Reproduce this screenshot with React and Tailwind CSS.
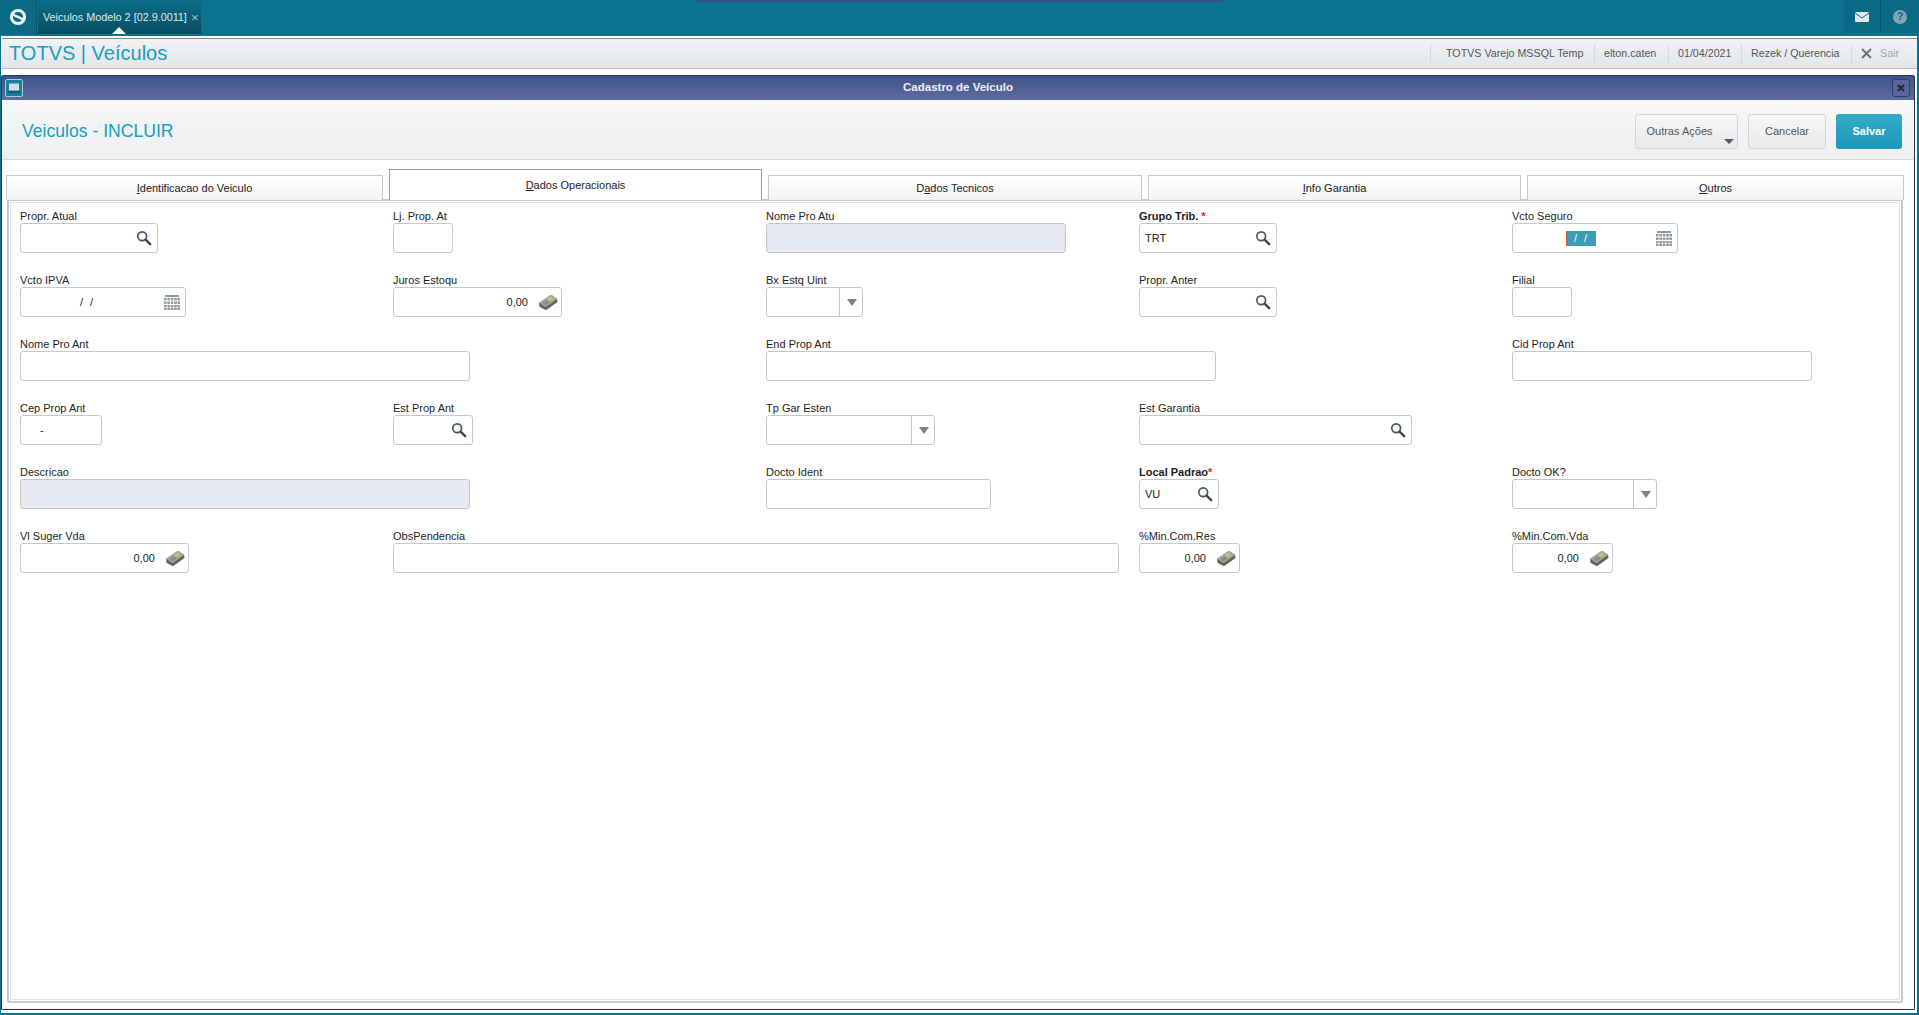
const font = { fontFamily: '"Liberation Sans", Arial, sans-serif' };

const SearchIcon = () => (
  <svg width="16" height="16" viewBox="0 0 16 16" className="shrink-0">
    <circle cx="6.2" cy="6.2" r="4.4" fill="#f4f6f8" stroke="#4b5563" strokeWidth="1.7" />
    <path d="M9.6 9.6 L14.2 14.2" stroke="#3f4754" strokeWidth="2.4" strokeLinecap="round" />
  </svg>
);

const CalendarIcon = () => (
  <svg width="16" height="15" viewBox="0 0 16 15" fill="#8f96a0" className="shrink-0">
    <rect x="1" y="0" width="14" height="2" />
    {[3, 6.5, 10, 13].map(y =>
      [0, 3.4, 6.8, 10.2, 13.4].map(x => <rect key={`${x}-${y}`} x={x} y={y} width="2.6" height="2.4" />)
    )}
  </svg>
);

const MoneyIcon = () => (
  <svg width="20" height="17" viewBox="0 0 20 17" className="shrink-0">
    <path d="M1 9 L12 1.5 Q13 1 14 1.5 L19 5 L19.5 8 L9 15.5 Q8 16.3 6.5 15.6 L1.5 12.8 Z" fill="#66625a" />
    <path d="M1 8.8 L12 1.2 Q13 0.8 14 1.3 L19.3 4.8 L8.5 12.6 Q7.5 13.2 6.5 12.6 Z" fill="#aaa79c" />
    <path d="M9 5 L12.4 2.8 L15.4 4.8 L12 7.2 Z" fill="#a6d872" />
    <path d="M4 9 L8.5 6 L12 8.4 L7.6 11.4 Z" fill="#8f8c80" />
  </svg>
);

const Field = ({ label, className = '', w, kind, value, disabled, bold, req }) => (
  <div className={className}>
    <div className={`h-[14px] whitespace-pre text-[11px] leading-[14px] text-[#1d1d1d] ${bold ? 'font-bold' : ''}`}>
      {label}
      {req && <span className="text-[#e0242c]">{req}</span>}
    </div>
    <div
      className={`flex h-[30px] items-center rounded-[3px] border border-[#c6c6c6] text-[11px] text-[#222] ${w} ${
        disabled ? 'bg-[#e6e9ef]' : 'bg-white'
      }`}
    >
      {kind === 'search' && (
        <>
          <span className="flex-1 pl-[5px]">{value}</span>
          <span className="mr-[5px]"><SearchIcon /></span>
        </>
      )}
      {kind === 'date' && (
        <>
          <span className="flex-1 pl-[59px] tracking-[2px]">/ /</span>
          <span className="mr-[5px]"><CalendarIcon /></span>
        </>
      )}
      {kind === 'dateActive' && (
        <>
          <span className="ml-[53px] h-[15px] w-[30px] border-l border-[#c0583c] bg-[#3a9cb8] text-center leading-[15px] tracking-[2px] text-white">/ /</span>
          <span className="flex-1" />
          <span className="mr-[5px]"><CalendarIcon /></span>
        </>
      )}
      {kind === 'money' && (
        <>
          <span className="flex-1 pr-[10px] text-right">0,00</span>
          <span className="mr-[3px]"><MoneyIcon /></span>
        </>
      )}
      {kind === 'select' && (
        <>
          <span className="flex-1" />
          <span className="flex h-full w-[23px] items-center justify-center border-l border-[#c6c6c6] pl-[2px]">
            <span className="h-0 w-0 border-x-[5px] border-t-[7px] border-x-transparent border-t-[#7a828c]" />
          </span>
        </>
      )}
      {kind === 'cep' && <span className="pl-[19px]">-</span>}
    </div>
  </div>
);

const Tab = ({ children, className = '', active }) => (
  <div
    className={`flex shrink-0 items-center justify-center text-[11px] text-[#222] ${className} ${
      active
        ? 'h-[31px] border-x border-t border-[#9a9a9a] bg-white'
        : 'h-[25px] border-x border-t border-[#c8c8c8] bg-gradient-to-b from-white to-[#f2f2f2] pt-px'
    }`}
  >
    <span>{children}</span>
  </div>
);

const HeaderCell = ({ children, className = '' }) => (
  <div className={`flex h-[20px] items-center whitespace-nowrap border-l border-[#d5d8dc] ${className}`}>{children}</div>
);

const Button = ({ children, className = '' }) => (
  <div className={`flex h-[35px] items-center justify-center rounded-[3px] border border-[#d5d5d5] bg-gradient-to-b from-[#f7f7f7] to-[#e9e9e9] pt-px text-[11px] text-[#555] ${className}`}>
    {children}
  </div>
);

export default function App() {
  return (
    <div style={font} className="relative flex h-[1015px] w-[1919px] flex-col overflow-hidden bg-white">
      {/* faixa azul do canto superior */}
      <div className="absolute left-[695px] top-0 h-[2px] w-[527px] bg-[#33508c]" />

      {/* barra superior */}
      <div className="flex h-[36px] shrink-0 bg-[#0b7390]">
        <div className="flex h-[34px] w-[36px] items-center justify-center bg-[#0a6a85]">
          <svg width="18" height="18" viewBox="0 0 18 18">
            <circle cx="9" cy="9" r="6.6" fill="none" stroke="#eef6f8" strokeWidth="3" />
            <path d="M3.8 6.6 L14.2 11.4" stroke="#eef6f8" strokeWidth="2.6" />
          </svg>
        </div>
        <div className="w-px bg-[#08566c]" />
        <div className="relative ml-px flex h-[34px] w-[163px] items-center whitespace-nowrap bg-gradient-to-b from-[#0b6e88] to-[#064e62] pl-[5px] text-[10.8px] text-[#dcecf0]">
          <span>Veiculos Modelo 2 [02.9.0011]</span>
          <span className="ml-[4px] text-[13px] leading-none text-[#9fc0ca]">×</span>
          <span className="absolute bottom-0 left-[74px] h-0 w-0 border-x-[7px] border-b-[7px] border-x-transparent border-b-white" />
        </div>
        <div className="flex-1" />
        <div className="flex h-[33px] w-[37px] items-center justify-center border-r border-[#08566c] bg-[#0a6a85]">
          <svg width="14" height="10" viewBox="0 0 14 10">
            <rect width="14" height="10" rx="1" fill="#dfe9ee" />
            <path d="M0 1 L7 6 L14 1" fill="none" stroke="#0a6a85" strokeWidth="1" />
          </svg>
        </div>
        <div className="flex h-[33px] w-[38px] items-center justify-center bg-[#0a6a85]">
          <span className="flex h-[14px] w-[14px] items-center justify-center rounded-full bg-[#84a6b3] text-[11px] font-bold leading-none text-[#0a6a85]">?</span>
        </div>
      </div>

      {/* area branca com as bordas da janela principal */}
      <div className="flex min-h-0 flex-1 flex-col border-b-2 border-l border-r-2 border-[#0b7390] pt-[2px]">
        {/* cabecalho TOTVS */}
        <div className="ml-px flex h-[31px] shrink-0 items-center border-y border-t-[#8a8a8a] border-b-[#bcbcbc] bg-gradient-to-b from-[#f0f2f4] to-[#e3e6e9] pl-[7px]">
          <span className="-mt-[2px] flex-1 text-[20px] leading-none text-[#159fc2]">TOTVS | Veículos</span>
          <div className="flex items-center text-[10.7px] text-[#555]">
            <HeaderCell className="w-[164px] pl-[15px]">TOTVS Varejo MSSQL Temp</HeaderCell>
            <HeaderCell className="w-[74px] pl-[9px]">elton.caten</HeaderCell>
            <HeaderCell className="w-[73px] pl-[9px]">01/04/2021</HeaderCell>
            <HeaderCell className="w-[110px] pl-[9px]">Rezek / Querencia</HeaderCell>
            <HeaderCell className="w-[66px] pl-[9px]">
              <svg width="11" height="11" viewBox="0 0 11 11" className="mr-[8px]">
                <path d="M1 1 L10 10 M10 1 L1 10" stroke="#6b7078" strokeWidth="1.8" />
              </svg>
              <span className="text-[#a0a4a8]">Sair</span>
            </HeaderCell>
          </div>
        </div>

        {/* janela Cadastro de Veiculo */}
        <div className="mb-[3px] mr-[2px] mt-[6px] flex min-h-0 flex-1 flex-col rounded-t-[2px] border border-[#1f3a64] bg-white">
          <div className="relative flex h-[24px] shrink-0 items-center justify-center bg-gradient-to-b from-[#3f5289] to-[#616c9f] text-[11.5px] font-bold text-[#eef0f6]">
            Cadastro de Veículo
            <span className="absolute left-[3px] top-[3px] flex h-[18px] w-[18px] items-center justify-center rounded-[2px] border border-[#9fd0dc] bg-[#17809e]">
              <svg width="12" height="11" viewBox="0 0 12 11">
                <rect x="1" y="0.5" width="10" height="7" fill="#d4dde2" />
                <rect x="0" y="8" width="12" height="2" fill="#0c5a70" />
              </svg>
            </span>
            <span className="absolute right-[4px] top-[3px] flex h-[18px] w-[18px] items-center justify-center rounded-[3px] border border-[#2d3d70] bg-[#5a669a]">
              <svg width="8" height="8" viewBox="0 0 8 8">
                <path d="M1 1 L7 7 M7 1 L1 7" stroke="#20263f" strokeWidth="2" />
              </svg>
            </span>
          </div>

          <div className="flex h-[60px] shrink-0 items-center border-b border-[#d8d8d8] bg-gradient-to-b from-[#f6f8f7] to-[#eeeff1] pl-[20px] pr-[12px] pt-[3px]">
            <span className="flex-1 text-[17.6px] text-[#159fc2]">Veiculos - INCLUIR</span>
            <Button className="relative w-[103px] pr-[14px]">
              Outras Ações
              <span className="absolute bottom-[4px] right-[3px] h-0 w-0 border-x-[5px] border-t-[5px] border-x-transparent border-t-[#555b66]" />
            </Button>
            <Button className="ml-[10px] w-[78px]">Cancelar</Button>
            <div className="ml-[10px] flex h-[35px] w-[66px] items-center justify-center rounded-[3px] bg-gradient-to-b from-[#36abc9] to-[#1a97b9] pt-px text-[11px] font-bold text-white">
              Salvar
            </div>
          </div>

          <div className="flex min-h-0 flex-1 flex-col px-[4px] pb-[6px] pt-[9px]">
            <div className="relative z-10 -mb-px flex items-end gap-[6px]">
              <Tab className="w-[377px]"><u>I</u>dentificacao do Veiculo</Tab>
              <Tab className="w-[373px]" active><u>D</u>ados Operacionais</Tab>
              <Tab className="w-[374px]">D<u>a</u>dos Tecnicos</Tab>
              <Tab className="w-[373px]"><u>I</u>nfo Garantia</Tab>
              <Tab className="w-[377px]"><u>O</u>utros</Tab>
            </div>
            <div className="ml-px mr-[7px] flex min-h-0 flex-1 rounded-[2px] border-2 border-[#cacaca] p-px">
              <div className="flex-1 rounded-[2px] border border-[#e2e2e2] pl-[9px] pt-[6px]">
                <div className="grid grid-cols-[repeat(5,373px)] gap-y-[20px]">
                  <Field label="Propr. Atual" w="w-[138px]" kind="search" />
                  <Field label="Lj. Prop. At" w="w-[60px]" />
                  <Field label="Nome Pro Atu" w="w-[300px]" disabled />
                  <Field label="Grupo Trib. " w="w-[138px]" kind="search" value="TRT" bold req="*" />
                  <Field label="Vcto Seguro" w="w-[166px]" kind="dateActive" />

                  <Field label="Vcto IPVA" w="w-[166px]" kind="date" />
                  <Field label="Juros Estoqu" w="w-[169px]" kind="money" />
                  <Field label="Bx Estq Uint" w="w-[97px]" kind="select" />
                  <Field label="Propr. Anter" w="w-[138px]" kind="search" />
                  <Field label="Filial" w="w-[60px]" />

                  <Field label="Nome Pro Ant" className="col-span-2" w="w-[450px]" />
                  <Field label="End Prop Ant" className="col-span-2" w="w-[450px]" />
                  <Field label="Cid Prop Ant" w="w-[300px]" />

                  <Field label="Cep Prop Ant" w="w-[82px]" kind="cep" />
                  <Field label="Est Prop Ant" w="w-[80px]" kind="search" />
                  <Field label="Tp Gar Esten" w="w-[169px]" kind="select" />
                  <Field label="Est Garantia" className="col-span-2" w="w-[273px]" kind="search" />

                  <Field label="Descricao" className="col-span-2" w="w-[450px]" disabled />
                  <Field label="Docto Ident" w="w-[225px]" />
                  <Field label="Local Padrao" w="w-[80px]" kind="search" value="VU" bold req="*" />
                  <Field label="Docto OK?" w="w-[145px]" kind="select" />

                  <Field label="Vl Suger Vda" w="w-[169px]" kind="money" />
                  <Field label="ObsPendencia" className="col-span-2" w="w-[726px]" />
                  <Field label="%Min.Com.Res" w="w-[101px]" kind="money" />
                  <Field label="%Min.Com.Vda" w="w-[101px]" kind="money" />
                </div>
              </div>
            </div>
          </div>
        </div>
      </div>
    </div>
  );
}
